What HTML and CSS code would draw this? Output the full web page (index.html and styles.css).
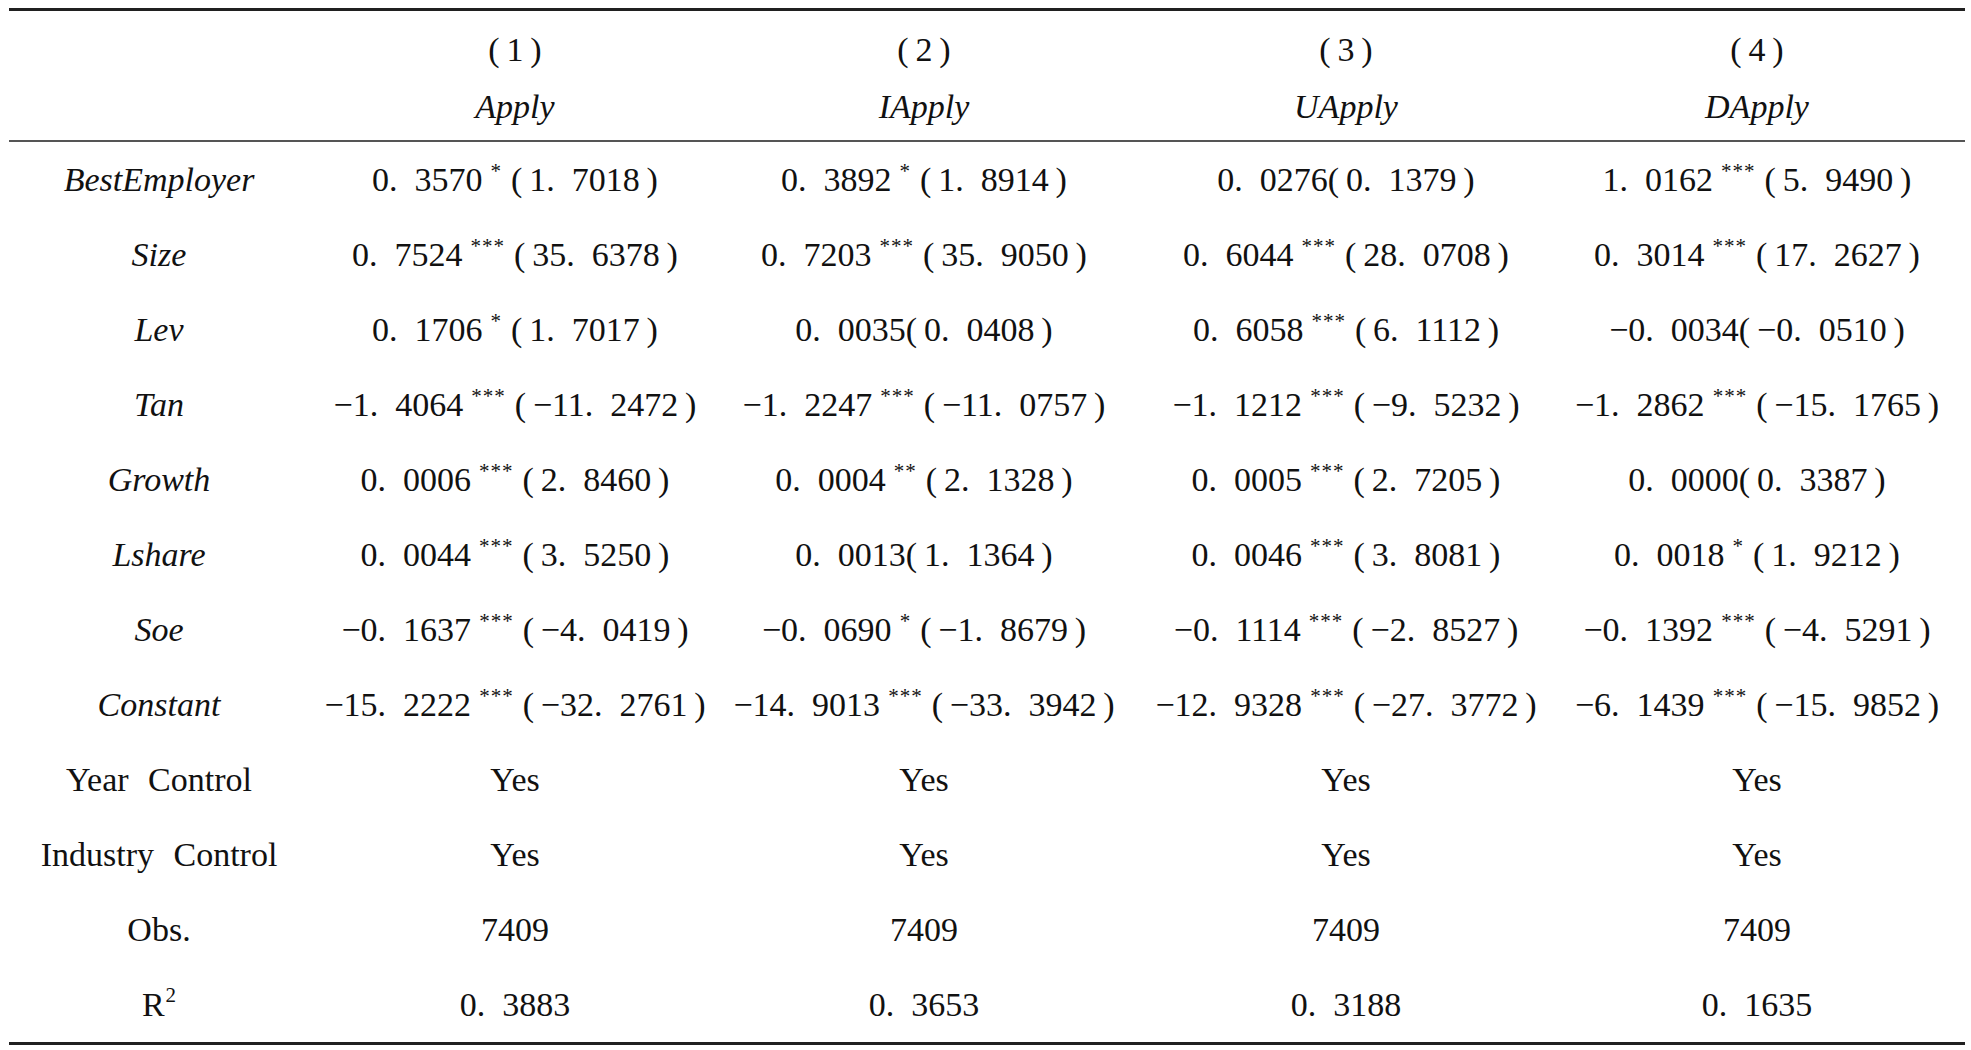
FILE: index.html
```html
<!DOCTYPE html>
<html lang="en">
<head>
<meta charset="utf-8">
<title>Regression table</title>
<link rel="stylesheet" href="styles.css">
</head>
<body>
<table class="reg">
  <colgroup>
    <col class="c-label">
    <col class="c-1">
    <col class="c-2">
    <col class="c-3">
    <col class="c-4">
  </colgroup>
  <thead>
    <tr>
      <th></th>
      <th><div class="num">(&thinsp;1&thinsp;)</div><div class="dep">Apply</div></th>
      <th><div class="num">(&thinsp;2&thinsp;)</div><div class="dep">IApply</div></th>
      <th><div class="num">(&thinsp;3&thinsp;)</div><div class="dep">UApply</div></th>
      <th class="last"><div class="num">(&thinsp;4&thinsp;)</div><div class="dep">DApply</div></th>
    </tr>
  </thead>
  <tbody>
    <tr>
      <td class="var">BestEmployer</td>
      <td>0.&ensp;3570<sup class="st">*</sup>(&thinsp;1.&ensp;7018&thinsp;)</td>
      <td>0.&ensp;3892<sup class="st">*</sup>(&thinsp;1.&ensp;8914&thinsp;)</td>
      <td>0.&ensp;0276(&thinsp;0.&ensp;1379&thinsp;)</td>
      <td class="last">1.&ensp;0162<sup class="st">***</sup>(&thinsp;5.&ensp;9490&thinsp;)</td>
    </tr>
    <tr>
      <td class="var">Size</td>
      <td>0.&ensp;7524<sup class="st">***</sup>(&thinsp;35.&ensp;6378&thinsp;)</td>
      <td>0.&ensp;7203<sup class="st">***</sup>(&thinsp;35.&ensp;9050&thinsp;)</td>
      <td>0.&ensp;6044<sup class="st">***</sup>(&thinsp;28.&ensp;0708&thinsp;)</td>
      <td class="last">0.&ensp;3014<sup class="st">***</sup>(&thinsp;17.&ensp;2627&thinsp;)</td>
    </tr>
    <tr>
      <td class="var">Lev</td>
      <td>0.&ensp;1706<sup class="st">*</sup>(&thinsp;1.&ensp;7017&thinsp;)</td>
      <td>0.&ensp;0035(&thinsp;0.&ensp;0408&thinsp;)</td>
      <td>0.&ensp;6058<sup class="st">***</sup>(&thinsp;6.&ensp;1112&thinsp;)</td>
      <td class="last">&minus;0.&ensp;0034(&thinsp;&minus;0.&ensp;0510&thinsp;)</td>
    </tr>
    <tr>
      <td class="var">Tan</td>
      <td>&minus;1.&ensp;4064<sup class="st">***</sup>(&thinsp;&minus;11.&ensp;2472&thinsp;)</td>
      <td>&minus;1.&ensp;2247<sup class="st">***</sup>(&thinsp;&minus;11.&ensp;0757&thinsp;)</td>
      <td>&minus;1.&ensp;1212<sup class="st">***</sup>(&thinsp;&minus;9.&ensp;5232&thinsp;)</td>
      <td class="last">&minus;1.&ensp;2862<sup class="st">***</sup>(&thinsp;&minus;15.&ensp;1765&thinsp;)</td>
    </tr>
    <tr>
      <td class="var">Growth</td>
      <td>0.&ensp;0006<sup class="st">***</sup>(&thinsp;2.&ensp;8460&thinsp;)</td>
      <td>0.&ensp;0004<sup class="st">**</sup>(&thinsp;2.&ensp;1328&thinsp;)</td>
      <td>0.&ensp;0005<sup class="st">***</sup>(&thinsp;2.&ensp;7205&thinsp;)</td>
      <td class="last">0.&ensp;0000(&thinsp;0.&ensp;3387&thinsp;)</td>
    </tr>
    <tr>
      <td class="var">Lshare</td>
      <td>0.&ensp;0044<sup class="st">***</sup>(&thinsp;3.&ensp;5250&thinsp;)</td>
      <td>0.&ensp;0013(&thinsp;1.&ensp;1364&thinsp;)</td>
      <td>0.&ensp;0046<sup class="st">***</sup>(&thinsp;3.&ensp;8081&thinsp;)</td>
      <td class="last">0.&ensp;0018<sup class="st">*</sup>(&thinsp;1.&ensp;9212&thinsp;)</td>
    </tr>
    <tr>
      <td class="var">Soe</td>
      <td>&minus;0.&ensp;1637<sup class="st">***</sup>(&thinsp;&minus;4.&ensp;0419&thinsp;)</td>
      <td>&minus;0.&ensp;0690<sup class="st">*</sup>(&thinsp;&minus;1.&ensp;8679&thinsp;)</td>
      <td>&minus;0.&ensp;1114<sup class="st">***</sup>(&thinsp;&minus;2.&ensp;8527&thinsp;)</td>
      <td class="last">&minus;0.&ensp;1392<sup class="st">***</sup>(&thinsp;&minus;4.&ensp;5291&thinsp;)</td>
    </tr>
    <tr>
      <td class="var">Constant</td>
      <td>&minus;15.&ensp;2222<sup class="st">***</sup>(&thinsp;&minus;32.&ensp;2761&thinsp;)</td>
      <td>&minus;14.&ensp;9013<sup class="st">***</sup>(&thinsp;&minus;33.&ensp;3942&thinsp;)</td>
      <td>&minus;12.&ensp;9328<sup class="st">***</sup>(&thinsp;&minus;27.&ensp;3772&thinsp;)</td>
      <td class="last">&minus;6.&ensp;1439<sup class="st">***</sup>(&thinsp;&minus;15.&ensp;9852&thinsp;)</td>
    </tr>
    <tr>
      <td class="lab">Year Control</td>
      <td>Yes</td>
      <td>Yes</td>
      <td>Yes</td>
      <td class="last">Yes</td>
    </tr>
    <tr>
      <td class="lab">Industry Control</td>
      <td>Yes</td>
      <td>Yes</td>
      <td>Yes</td>
      <td class="last">Yes</td>
    </tr>
    <tr>
      <td class="lab">Obs.</td>
      <td>7409</td>
      <td>7409</td>
      <td>7409</td>
      <td class="last">7409</td>
    </tr>
    <tr>
      <td class="lab">R<sup class="sq">2</sup></td>
      <td>0.&ensp;3883</td>
      <td>0.&ensp;3653</td>
      <td>0.&ensp;3188</td>
      <td class="last">0.&ensp;1635</td>
    </tr>
  </tbody>
</table>
</body>
</html>
```

FILE: styles.css
```css
html, body {
  margin: 0;
  padding: 0;
  background: #ffffff;
}

body {
  font-family: "Liberation Serif", "Times New Roman", serif;
  color: #111111;
}

.reg {
  margin: 8px 0 0 9px;
  width: 1956px;
  table-layout: fixed;
  border-collapse: collapse;
  border-top: 3px solid #202020;
  border-bottom: 3px solid #202020;
  font-size: 34px;
}

.c-label { width: 300px; }
.c-1 { width: 412px; }
.c-2 { width: 406px; }
.c-3 { width: 438px; }
.c-4 { width: 400px; }

.reg thead tr {
  border-bottom: 2px solid #555555;
}

.reg th {
  font-weight: normal;
  text-align: center;
  padding: 10px 0 5px;
  height: 114px;
  vertical-align: top;
  white-space: nowrap;
}

.reg th .num,
.reg th .dep {
  line-height: 57px;
}

.reg th .dep {
  font-style: italic;
}

.reg td {
  height: 75px;
  padding: 0;
  text-align: center;
  vertical-align: middle;
  white-space: nowrap;
  line-height: 40px;
}

.reg th.last,
.reg td.last {
  padding-right: 16px;
}

.reg td.var {
  font-style: italic;
}

.reg td.lab {
  word-spacing: 11px;
}

.st {
  font-size: 21px;
  line-height: 0;
  vertical-align: 13px;
  margin: 0 9px 0 8px;
  letter-spacing: 1px;
}

.sq {
  font-size: 21px;
  line-height: 0;
  vertical-align: 14px;
  margin-left: 1px;
}
```
